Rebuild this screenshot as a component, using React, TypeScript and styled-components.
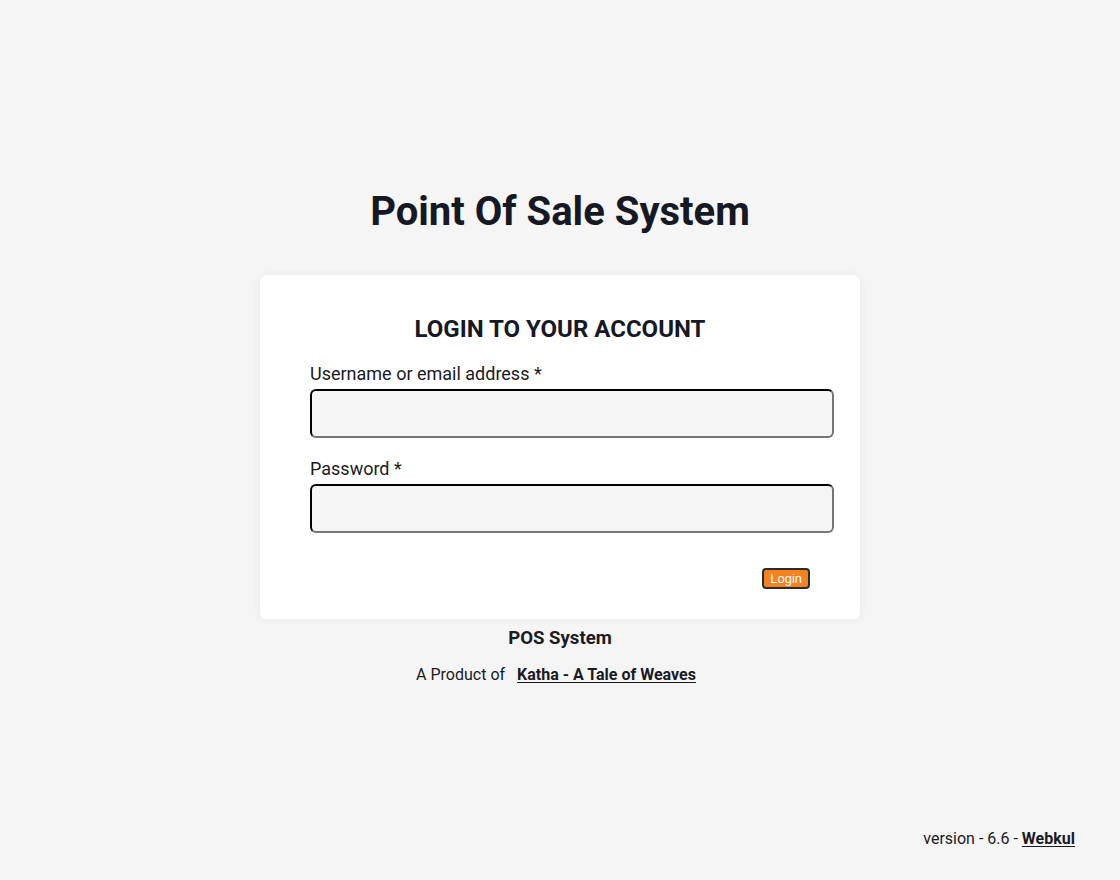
import React from "react";
import styled, { createGlobalStyle } from "styled-components";

const Global = createGlobalStyle`
  html, body { margin: 0; padding: 0; background: #f5f5f5; }
  body { font-family: Roboto, "Liberation Sans", Arial, sans-serif; color: #1a1a24; }
`;

const Page = styled.div`
  width: 1120px;
  height: 880px;
  display: flex;
  flex-direction: column;
  align-items: center;
  box-sizing: border-box;
  padding-top: 187px;
`;

const Title = styled.h1`
  margin: 0;
  font-size: 40px;
  font-weight: 700;
  line-height: 50px;
  color: #161824;
`;

const Card = styled.form`
  margin-top: 38px;
  width: 600px;
  box-sizing: border-box;
  background: #fff;
  border-radius: 6px;
  box-shadow: 0 0 8px rgba(0, 0, 0, 0.06);
  padding: 39px 26px 30px 50px;
  display: flex;
  flex-direction: column;
`;

const CardTitle = styled.h2`
  margin: 0 0 0 -24px;
  text-align: center;
  font-size: 24px;
  font-weight: 700;
  line-height: 30px;
  color: #161824;
`;

const Field = styled.div<{ $gap: number }>`
  display: flex;
  flex-direction: column;
  margin-top: ${(p) => p.$gap}px;
`;

const Label = styled.label`
  font-size: 18px;
  line-height: 22px;
  color: #1a1a24;
  margin-bottom: 4px;
`;

const Input = styled.input`
  height: 49px;
  box-sizing: border-box;
  width: 524px;
  background: #f5f5f5;
  border: 2px inset #767676;
  border-top-color: #1e1e1e;
  border-left-color: #1e1e1e;
  border-radius: 6px;
  outline: none;
`;

const Actions = styled.div`
  display: flex;
  justify-content: flex-end;
  padding-right: 24px;
  margin-top: 35px;
`;

const LoginButton = styled.button`
  font-family: "Liberation Sans", Arial, sans-serif;
  font-size: 13px;
  line-height: 16px;
  color: #fff;
  background: #f58220;
  border: 2px solid #2b2b2b;
  border-radius: 4px;
  padding: 0 6px;
  height: 21px;
`;

const Brand = styled.div`
  margin-top: 8px;
  font-size: 18.6px;
  font-weight: 700;
  line-height: 22px;
`;

const Product = styled.div`
  margin-top: 16px;
  padding-right: 8px;
  font-size: 16px;
  line-height: 20px;
  display: flex;
  gap: 12px;
`;

const Link = styled.a`
  font-weight: 700;
  color: #1a1a24;
  text-decoration: underline;
  text-underline-offset: 2px;
`;

const Footer = styled.div`
  margin-top: auto;
  align-self: flex-end;
  margin-right: 45px;
  margin-bottom: 31px;
  font-size: 16px;
  line-height: 20px;
`;

export default function App() {
  return (
    <>
      <Global />
      <Page>
        <Title>Point Of Sale System</Title>
        <Card onSubmit={(e) => e.preventDefault()}>
          <CardTitle>LOGIN TO YOUR ACCOUNT</CardTitle>
          <Field $gap={19}>
            <Label>Username or email address *</Label>
            <Input type="text" />
          </Field>
          <Field $gap={20}>
            <Label>Password *</Label>
            <Input type="password" />
          </Field>
          <Actions>
            <LoginButton type="submit">Login</LoginButton>
          </Actions>
        </Card>
        <Brand>POS System</Brand>
        <Product>
          <span>A Product of</span>
          <Link href="#">Katha - A Tale of Weaves</Link>
        </Product>
        <Footer>
          version - 6.6 - <Link href="#">Webkul</Link>
        </Footer>
      </Page>
    </>
  );
}
